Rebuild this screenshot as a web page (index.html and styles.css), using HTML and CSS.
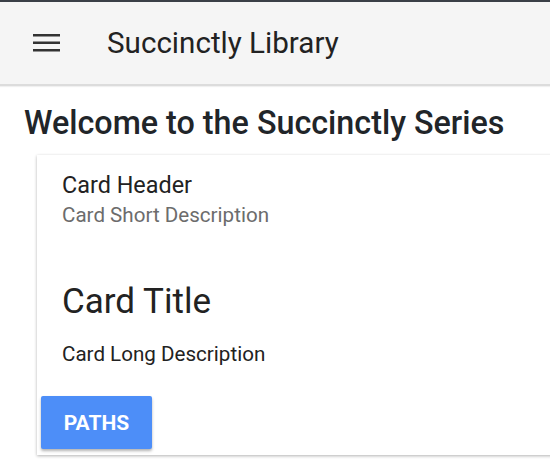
FILE: index.html
```html
<!DOCTYPE html>
<html>
<head>
<meta charset="utf-8">
<link rel="stylesheet" href="styles.css">
</head>
<body>
<div class="topstrip"></div>
<header class="appbar">
  <svg class="menu" width="27" height="18" viewBox="0 0 27 18"><rect x="0" y="0" width="27" height="2.5" fill="#333"/><rect x="0" y="7.5" width="27" height="2.5" fill="#333"/><rect x="0" y="15" width="27" height="2.5" fill="#333"/></svg>
  <span class="apptitle">Succinctly Library</span>
</header>
<main class="content">
  <h1 class="welcome">Welcome to the Succinctly Series</h1>
  <div class="card">
    <div class="card-head">
      <div class="card-header">Card Header</div>
      <div class="card-short">Card Short Description</div>
    </div>
    <div class="card-body">
      <div class="card-title">Card Title</div>
      <div class="card-long">Card Long Description</div>
    </div>
    <div class="card-actions">
      <button class="btn">PATHS</button>
    </div>
  </div>
</main>
</body>
</html>
```
FILE: styles.css
```css
html, body { margin: 0; padding: 0; background: #fff; }
body { font-family: Roboto, "Noto Sans", sans-serif; color: #212529; width: 550px; height: 464px; overflow: hidden; }
.topstrip { height: 2px; background: #3a3f47; }
.appbar { height: 82px; background: #f5f5f5; display: flex; align-items: center; padding-left: 33px; border-bottom: 2px solid #dcdcdc; box-shadow: 0 1px 1px rgba(0,0,0,0.06); }
.menu { display: block; margin-right: 47px; }
.apptitle { font-size: 29.6px; color: #222; }
.content { padding: 0 0 8px 24px; overflow: hidden; }
.welcome { margin: 18px 0 0 0; font-size: 32.3px; font-weight: 500; line-height: 38px; color: #212529; }
.card { margin: 13px 0 0 13px; width: 520px; background: #fff; box-shadow: 0 1px 3px rgba(0,0,0,0.3); padding-bottom: 6px; }
.card-head { padding: 16px 25px 0; }
.card-header { font-size: 23.4px; line-height: 28px; color: #222; }
.card-short { font-size: 20.6px; line-height: 30px; margin-top: 1px; color: #6c6c6c; }
.card-body { padding: 51px 25px 0; }
.card-title { font-size: 35px; line-height: 42px; color: #222; }
.card-long { font-size: 20.6px; line-height: 28px; margin-top: 17px; color: #222; }
.card-actions { padding: 28px 0 0 4px; }
.btn { display: block; background: #4d8ef8; color: #fff; border: none; border-radius: 2px; font-family: Roboto, sans-serif; font-weight: 700; font-size: 21px; width: 111px; height: 53px; padding: 0; box-shadow: 0 2px 3px rgba(0,0,0,0.3); }
```
